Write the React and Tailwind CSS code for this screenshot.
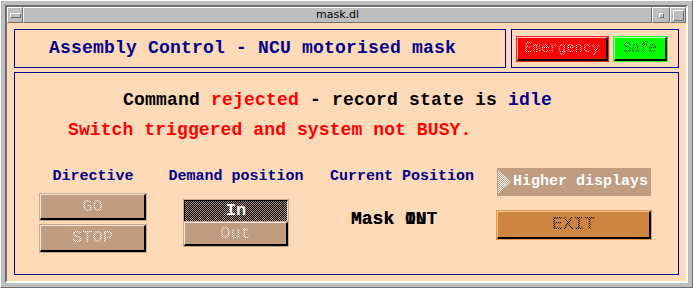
// mask.dl — MEDM style screen
const stipWhite =
  'text-transparent bg-clip-text bg-[image:repeating-conic-gradient(#ffffff_0_25%,transparent_0_50%)] bg-[length:2px_2px]'
const stipBlack =
  'text-transparent bg-clip-text bg-[image:repeating-conic-gradient(#000000_0_25%,transparent_0_50%)] bg-[length:2px_2px]'

export default function App() {
  return (
    <div className="w-[693px] h-[288px] flex bg-[#bebebe] border border-t-white border-l-white border-r-[#6e6e6e] border-b-[#6e6e6e] p-[4px] font-['Liberation_Mono',monospace]">
      <div className="flex-1 flex flex-col border-2 border-t-[#6e6e6e] border-l-[#6e6e6e] border-r-white border-b-white">
        {/* Title bar */}
        <div className="h-[16px] flex shrink-0">
          <div className="w-[16px] flex items-center justify-center border border-t-white border-l-white border-r-[#6e6e6e] border-b-[#6e6e6e]">
            <div className="w-[11px] h-[5px] border border-t-white border-l-white border-r-[#6e6e6e] border-b-[#6e6e6e]" />
          </div>
          <div className="flex-1 flex items-center justify-center border border-t-white border-l-white border-r-[#6e6e6e] border-b-[#6e6e6e] text-[11px] text-black font-['DejaVu_Sans',sans-serif]">
            mask.dl
          </div>
          <div className="w-[18px] flex items-center justify-center border border-t-white border-l-white border-r-[#6e6e6e] border-b-[#6e6e6e]">
            <div className="w-[5px] h-[5px] border border-t-white border-l-white border-r-[#6e6e6e] border-b-[#6e6e6e]" />
          </div>
          <div className="w-[16px] flex items-center justify-center border border-t-white border-l-white border-r-[#6e6e6e] border-b-[#6e6e6e]">
            <div className="w-[11px] h-[11px] border border-t-white border-l-white border-r-[#6e6e6e] border-b-[#6e6e6e]" />
          </div>
        </div>

        {/* Content */}
        <div className="flex-1 bg-[#ffdab9] pt-[6px] px-[7px] pb-[6px] flex flex-col gap-[4px]">
          {/* Header row */}
          <div className="h-[39px] flex gap-[5px] shrink-0">
            <div className="w-[492px] border border-[#00008b] flex items-center pl-[34px]">
              <span className="text-[18px] font-bold text-[#00008b] tracking-[0.2px]">
                Assembly Control - NCU motorised mask
              </span>
            </div>
            <div className="flex-1 border border-[#00008b] flex items-center pl-[5px] gap-[6px]">
              <div className="w-[91px] h-[24px] bg-[#ff0000] flex items-center justify-center border border-t-[#ffc0c0] border-l-[#ffc0c0] border-r-2 border-b-2 border-r-black border-b-black shadow-[0_0_0_1px_#ff2020]">
                <span className={`text-[14px] ${stipWhite}`}>Emergency</span>
              </div>
              <div className="w-[53px] h-[24px] bg-[#00ff00] flex items-center justify-center border border-t-[#c0ffc0] border-l-[#c0ffc0] border-r-2 border-b-2 border-r-black border-b-black shadow-[0_0_0_1px_#20ff20]">
                <span className={`text-[14px] ${stipBlack}`}>Safe</span>
              </div>
            </div>
          </div>

          {/* Main panel */}
          <div className="flex-1 border border-[#00008b] pt-[17px] flex flex-col">
            <div className="ml-[108px] text-[18px] leading-[20px] font-bold tracking-[0.2px] text-black whitespace-nowrap">
              Command <span className="text-[#ff0000]">rejected</span> - record state is{' '}
              <span className="text-[#00008b]">idle</span>
            </div>
            <div className="ml-[53px] mt-[10px] text-[18px] leading-[20px] font-bold tracking-[0.1px] text-[#ff0000] whitespace-nowrap">
              Switch triggered and system not BUSY.
            </div>

            <div className="mt-[28px] flex items-start">
              {/* Directive */}
              <div className="ml-[25px] w-[106px] flex flex-col items-center">
                <div className="h-[18px] leading-[18px] text-[15px] font-bold text-[#00008b] whitespace-nowrap">Directive</div>
                <Btn className="mt-[8px] h-[26px] w-[106px]">GO</Btn>
                <Btn className="mt-[5px] h-[27px] w-[106px]">STOP</Btn>
              </div>

              {/* Demand position */}
              <div className="ml-[22px] w-[136px] flex flex-col items-center">
                <div className="h-[18px] leading-[18px] text-[15px] font-bold text-[#00008b] whitespace-nowrap">Demand position</div>
                <div className="mt-[14px] w-[104px] flex flex-col shadow-[0_0_0_1px_#c9a68c]">
                  <div className="h-[22px] flex items-center justify-center border border-t-black border-l-black border-r-[#e8d8c8] border-b-[#e8d8c8] bg-[image:repeating-conic-gradient(#000000_0_25%,#b08c70_0_50%)] bg-[length:2px_2px]">
                    <span className="text-[17px] font-bold text-white">In</span>
                  </div>
                  <Btn className="h-[24px] w-[104px]">Out</Btn>
                </div>
              </div>

              {/* Current position */}
              <div className="ml-[26px] w-[144px] flex flex-col">
                <div className="h-[18px] leading-[18px] text-[15px] font-bold text-[#00008b] text-center whitespace-nowrap">Current Position</div>
                <div className="mt-[23px] ml-[21px] relative h-[20px] leading-[20px] text-[18px] font-bold text-black whitespace-nowrap">
                  Mask OUT
                  <span className="absolute left-0 top-0">Mask IN</span>
                </div>
              </div>

              {/* Related displays / exit */}
              <div className="ml-[23px] w-[154px] flex flex-col">
                <div className="h-[28px] bg-[#c09c80] flex items-center">
                  <svg width="14" height="24" viewBox="0 0 14 24" className="ml-[1px] shrink-0">
                    <defs>
                      <pattern id="chk" width="2" height="2" patternUnits="userSpaceOnUse">
                        <rect x="0" y="0" width="1" height="1" fill="#ffffff" />
                        <rect x="1" y="1" width="1" height="1" fill="#ffffff" />
                      </pattern>
                    </defs>
                    <polygon points="0,0 13,12 0,24" fill="url(#chk)" />
                  </svg>
                  <span className="ml-[1px] text-[15px] font-bold text-white whitespace-nowrap">Higher displays</span>
                </div>
                <div className="mt-[15px] h-[28px] bg-[#cd853f] flex items-center justify-center border border-t-[#f0c090] border-l-[#f0c090] border-r-2 border-b-2 border-r-black border-b-black shadow-[0_0_0_1px_#e09a50]">
                  <span className={`text-[18px] ${stipBlack}`}>EXIT</span>
                </div>
              </div>
            </div>
          </div>
        </div>
      </div>
    </div>
  )
}

function Btn({ className, children }) {
  return (
    <div
      className={`bg-[#c09c80] flex items-center justify-center border border-t-[#f4e8dc] border-l-[#f4e8dc] border-r-2 border-b-2 border-r-black border-b-black shadow-[0_0_0_1px_#c9a68c] ${className}`}
    >
      <span className={`text-[17px] ${stipWhite}`}>{children}</span>
    </div>
  )
}
